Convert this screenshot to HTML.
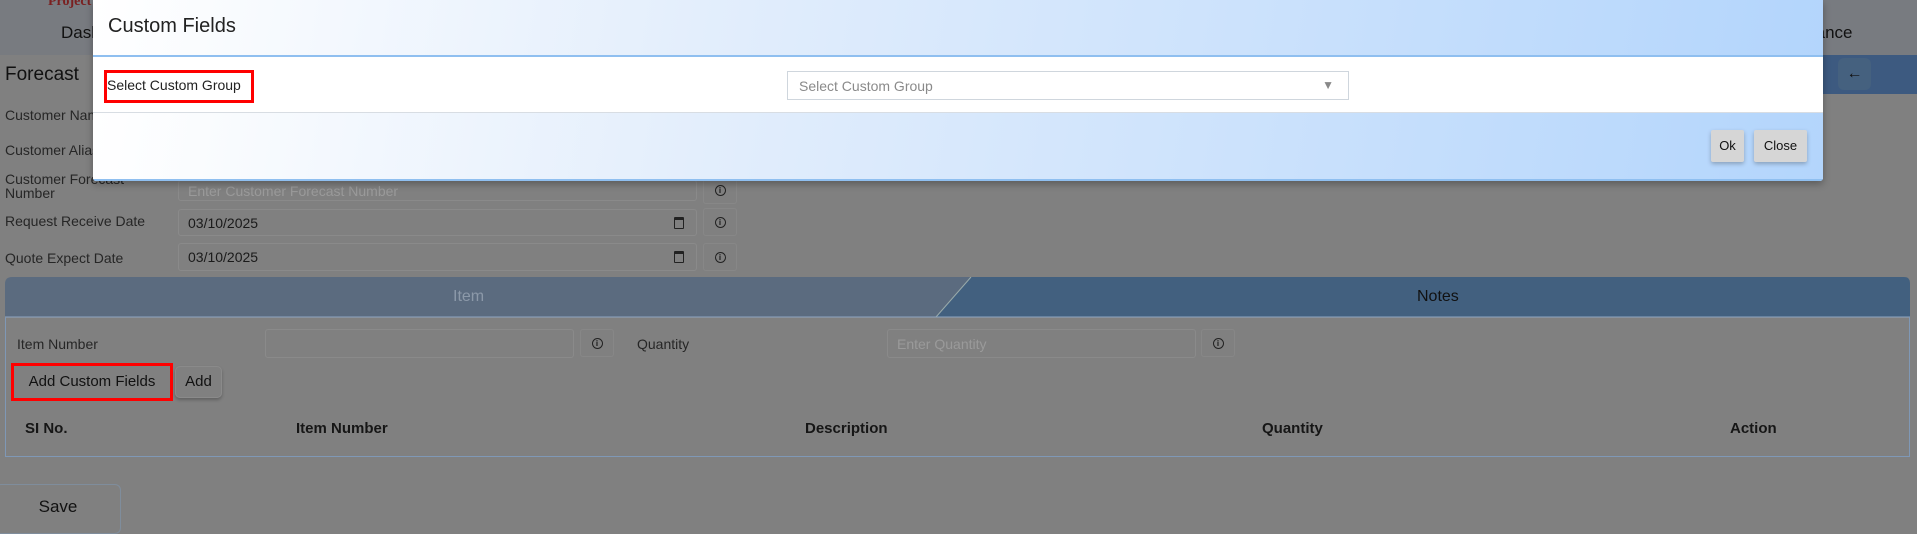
<!DOCTYPE html>
<html><head><meta charset="utf-8"><style>
*{box-sizing:border-box;margin:0;padding:0}
body{width:1917px;height:525px;overflow:hidden;background:#808080;font-family:"Liberation Sans",sans-serif;position:relative;color:#1a1a1a}
.a{position:absolute}
.lbl{font-size:14px;color:#262626}
.inp{position:absolute;border:1px solid #8a8a8a;border-radius:3px;background:#808080;font-size:14px;color:#1a1a1a;padding-left:9px;display:flex;align-items:center}
.info{position:absolute;border:1px solid #878787;border-radius:3px;width:34px;height:28px;display:flex;align-items:center;justify-content:center}
.info span{width:11px;height:11px;border:1.3px solid #222;border-radius:50%;font-size:8px;line-height:9px;text-align:center;font-weight:bold}
.th{position:absolute;top:420px;font-size:15px;font-weight:bold;color:#161616}
.cal{position:absolute;right:12px;width:10px;height:12px;border:1.5px solid #222;border-top-width:3px;border-radius:1px}
</style></head><body>
<div class="a" style="left:0;top:0;width:1917px;height:55px;background:#787b80"></div>
<div class="a" style="left:48px;top:-6px;font-family:'Liberation Serif',serif;color:#7a2020;font-size:14px;font-weight:bold">Project</div>
<div class="a" style="left:61px;top:23px;font-size:17px;color:#111">Dashboard</div>
<div class="a" style="left:1792px;top:23px;font-size:17px;color:#111">Finance</div>
<div class="a" style="left:0;top:55px;width:1917px;height:39px;background:#3d5a80"></div>
<div class="a" style="left:0;top:55px;width:93px;height:39px;background:#808080"></div>
<div class="a" style="left:5px;top:64px;font-size:19px;color:#111">Forecast</div>
<div class="a" style="left:1838px;top:58px;width:33px;height:32px;border-radius:6px;background:#45617f;color:#111;text-align:center;line-height:32px;font-size:16px">←</div>
<div class="a lbl" style="left:5px;top:107px">Customer Name</div>
<div class="a lbl" style="left:5px;top:142px">Customer Alias</div>
<div class="a lbl" style="left:5px;top:172px;line-height:14px">Customer Forecast<br>Number</div>
<div class="inp" style="left:178px;top:180px;width:519px;height:21px;color:#9a9a9a">Enter Customer Forecast Number</div>
<div class="info" style="left:703px;top:176px"><span>i</span></div>
<div class="a lbl" style="left:5px;top:213px">Request Receive Date</div>
<div class="inp" style="left:178px;top:209px;width:519px;height:27px">03/10/2025<span class="cal"></span></div>
<div class="info" style="left:703px;top:208px"><span>i</span></div>
<div class="a lbl" style="left:5px;top:250px">Quote Expect Date</div>
<div class="inp" style="left:178px;top:243px;width:519px;height:28px">03/10/2025<span class="cal"></span></div>
<div class="info" style="left:703px;top:243px"><span>i</span></div>
<!-- tabs -->
<svg class="a" style="left:0;top:277px" width="1917" height="42">
<path d="M12 0 H971 L936 40 H5 V7 Q5 0 12 0Z" fill="#5b6b7f"/>
<path d="M971 0 H1904 Q1910 0 1910 6 V40 H936 Z" fill="#42607f"/>
<path d="M971 0 L936 40" stroke="#9aa" stroke-width="1"/>
<line x1="5" y1="40" x2="1910" y2="40" stroke="#8fa6c2"/>
</svg>
<div class="a" style="left:453px;top:288px;font-size:16px;color:#8c99a9">Item</div>
<div class="a" style="left:1417px;top:288px;font-size:16px;color:#111">Notes</div>
<div class="a" style="left:5px;top:317px;width:1905px;height:140px;border:1px solid #7f98b6;border-top:none"></div>
<div class="a lbl" style="left:17px;top:336px">Item Number</div>
<div class="inp" style="left:265px;top:329px;width:309px;height:29px"></div>
<div class="info" style="left:580px;top:329px"><span>i</span></div>
<div class="a lbl" style="left:637px;top:336px">Quantity</div>
<div class="inp" style="left:887px;top:329px;width:309px;height:29px;color:#9a9a9a">Enter Quantity</div>
<div class="info" style="left:1201px;top:329px"><span>i</span></div>
<div class="a" style="left:11px;top:363px;width:162px;height:38px;border:3px solid #ff0000"></div>
<div class="a" style="left:15px;top:367px;width:154px;height:30px;border-radius:4px;font-size:15px;color:#111;text-align:center;line-height:30px">Add Custom Fields</div>
<div class="a" style="left:175px;top:366px;width:47px;height:32px;border:1px solid #8a8a8a;border-radius:5px;box-shadow:0 2px 3px rgba(0,0,0,.25);font-size:15px;color:#111;text-align:center;line-height:30px">Add</div>
<div class="th" style="left:25px">SI No.</div>
<div class="th" style="left:296px">Item Number</div>
<div class="th" style="left:805px">Description</div>
<div class="th" style="left:1262px">Quantity</div>
<div class="th" style="left:1730px">Action</div>
<div class="a" style="left:-5px;top:484px;width:126px;height:50px;border:1px solid #7f8d9c;border-radius:6px;font-size:17px;color:#111;text-align:center;line-height:44px">Save</div>
<!-- modal -->
<div class="a" style="left:93px;top:0;width:1730px;height:181px;background:#fff;border-radius:0 0 3px 3px;box-shadow:0 3px 8px rgba(0,0,0,.3);overflow:hidden">
 <div style="height:57px;background:linear-gradient(100deg,#ffffff 0%,#e3eefc 35%,#b3d5fc 100%);border-bottom:2px solid #8fbff0;position:relative">
  <div class="a" style="left:15px;top:15px;font-size:20px;color:#222">Custom Fields</div>
 </div>
 <div style="height:56px;background:#fff;border-bottom:1px solid #d8dde3;position:relative">
  <div class="a" style="left:11px;top:13px;width:150px;height:33px;border:3px solid #ff0000"></div>
  <div class="a" style="left:14px;top:20px;font-size:14px;color:#222">Select Custom Group</div>
  <div class="a" style="left:694px;top:14px;width:562px;height:29px;border:1px solid #cfd6dd;font-size:14px;color:#8a8a8a;padding:6px 11px">Select Custom Group<span style="position:absolute;right:14px;top:6px;font-size:12px;color:#888">▼</span></div>
 </div>
 <div style="height:68px;background:linear-gradient(100deg,#ffffff 0%,#e3eefc 35%,#b3d5fc 100%);border-bottom:2px solid #8fbff0;position:relative">
  <div class="a" style="left:1618px;top:17px;width:33px;height:32px;background:#d6d6d6;border-radius:2px;box-shadow:0 2px 4px rgba(0,0,0,.25);font-size:13px;text-align:center;line-height:32px;color:#111">Ok</div>
  <div class="a" style="left:1661px;top:17px;width:53px;height:32px;background:#d6d6d6;border-radius:2px;box-shadow:0 2px 4px rgba(0,0,0,.25);font-size:13px;text-align:center;line-height:32px;color:#111">Close</div>
 </div>
</div>
</body></html>
